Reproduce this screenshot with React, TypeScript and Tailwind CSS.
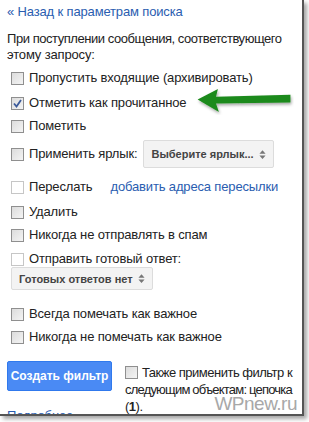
import React from "react";

function Box({ checked = false, light = false }: { checked?: boolean; light?: boolean }) {
    return (
        <span
            className={`relative inline-block w-[13px] h-[13px] shrink-0 border ${
                light ? "border-[#c6c6c6] bg-white" : "border-[#8f8f8f] bg-gradient-to-br from-[#dcdcdc] to-[#f4f4f4]"
            }`}
        >
            {checked && (
                <svg viewBox="0 0 13 13" className="absolute -left-px -top-px w-[13px] h-[13px]">
                    <path d="M3 6.5 L5.5 9.5 L10 3" fill="none" stroke="#3b5a9a" strokeWidth="1.8" />
                </svg>
            )}
        </span>
    );
}

function Row({ label, checked, light, className = "" }: { label: string; checked?: boolean; light?: boolean; className?: string }) {
    return (
        <div className={`flex items-center gap-[5px] pl-[11px] ${className}`}>
            <Box checked={checked} light={light} />
            <span className="whitespace-nowrap">{label}</span>
        </div>
    );
}

function Select({ label, className = "" }: { label: string; className?: string }) {
    return (
        <div
            className={`flex items-center gap-[5px] rounded-[2px] border border-[#dcdcdc] bg-[#f3f3f3] px-[7px] text-[11px] font-bold text-[#444] tracking-normal whitespace-nowrap ${className}`}
        >
            <span>{label}</span>
            <svg viewBox="0 0 8 12" className="w-[7px] h-[11px]">
                <path d="M4 1 L7.5 5 H0.5 Z M4 11 L7.5 7 H0.5 Z" fill="#777" />
            </svg>
        </div>
    );
}

export default function App() {
    return (
        <div className="w-[309px] h-[422px] bg-white overflow-hidden" style={{ fontFamily: '"Liberation Sans", Arial, sans-serif' }}>
            <div className="relative w-[304px] h-[416px] overflow-hidden border-r-2 border-b-2 border-[#555] shadow-[3px_3px_4px_rgba(0,0,0,0.35)] bg-white text-[13px] leading-[16px] tracking-[-0.15px] text-[#222]">
                <div className="pl-[7px] pt-[4px] text-[#2a5db0]">« Назад к параметрам поиска</div>

                <div className="pl-[7px] pt-[11px]">
                    <div className="whitespace-nowrap tracking-[-0.45px]">При поступлении сообщения, соответствующего</div>
                    <div>этому запросу:</div>
                </div>

                <Row label="Пропустить входящие (архивировать)" className="mt-[7px]" />
                <Row label="Отметить как прочитанное" checked className="mt-[9px]" />
                <Row label="Пометить" className="mt-[7px]" />

                <div className="flex items-center gap-[4px] pl-[11px] mt-[6px]">
                    <Box />
                    <span className="ml-[1px] whitespace-nowrap">Применить ярлык:</span>
                    <Select label="Выберите ярлык..." className="ml-[2px] h-[28px]" />
                </div>

                <div className="flex items-center gap-[5px] pl-[11px] mt-[11px]">
                    <Box light />
                    <span>Переслать</span>
                    <span className="ml-[13px] whitespace-nowrap text-[#2a5db0]">добавить адреса пересылки</span>
                </div>

                <Row label="Удалить" className="mt-[9px]" />
                <Row label="Никогда не отправлять в спам" className="mt-[7px]" />
                <Row label="Отправить готовый ответ:" light className="mt-[8px]" />
                <div className="pl-[11px]">
                    <Select label="Готовых ответов нет" className="inline-flex h-[23px]" />
                </div>

                <Row label="Всегда помечать как важное" className="mt-[16px]" />
                <Row label="Никогда не помечать как важное" className="mt-[7px]" />

                <div className="flex mt-[16px] pl-[7px]">
                    <div className="shrink-0">
                        <div className="flex h-[30px] w-[105px] items-center justify-center rounded-[2px] bg-[#4a8af4] border border-[#3079ed] text-[12px] font-bold tracking-normal text-white">
                            Создать фильтр
                        </div>
                        <div className="mt-[17px] text-[#2a5db0] underline">Подробнее</div>
                    </div>
                    <div className="ml-[13px] pt-[3px] leading-[17px] whitespace-nowrap tracking-[-0.5px]">
                        <div className="flex items-center gap-[4px]">
                            <Box />
                            <span>Также применить фильтр к</span>
                        </div>
                        <div className="tracking-[-0.8px]">следующим объектам: цепочка</div>
                        <div>
                            (<b>1</b>).
                        </div>
                    </div>
                </div>

                <div className="absolute right-[5px] bottom-0 text-[19px] leading-[20px] text-[#a8a8a8] tracking-[-0.5px]">WPnew.ru</div>

                <svg viewBox="0 0 100 30" className="absolute left-[196px] top-[86px] w-[98px] h-[29px]">
                    <defs>
                        <filter id="sh" x="-10%" y="-30%" width="130%" height="170%">
                            <feDropShadow dx="1" dy="2" stdDeviation="1.5" floodColor="#000" floodOpacity="0.35" />
                        </filter>
                    </defs>
                    <path d="M1 14 L22 3 L20 11 L97 9 L97 17 L20 18 L23 27 Z" fill="#1d8a1d" filter="url(#sh)" />
                </svg>
            </div>
        </div>
    );
}
